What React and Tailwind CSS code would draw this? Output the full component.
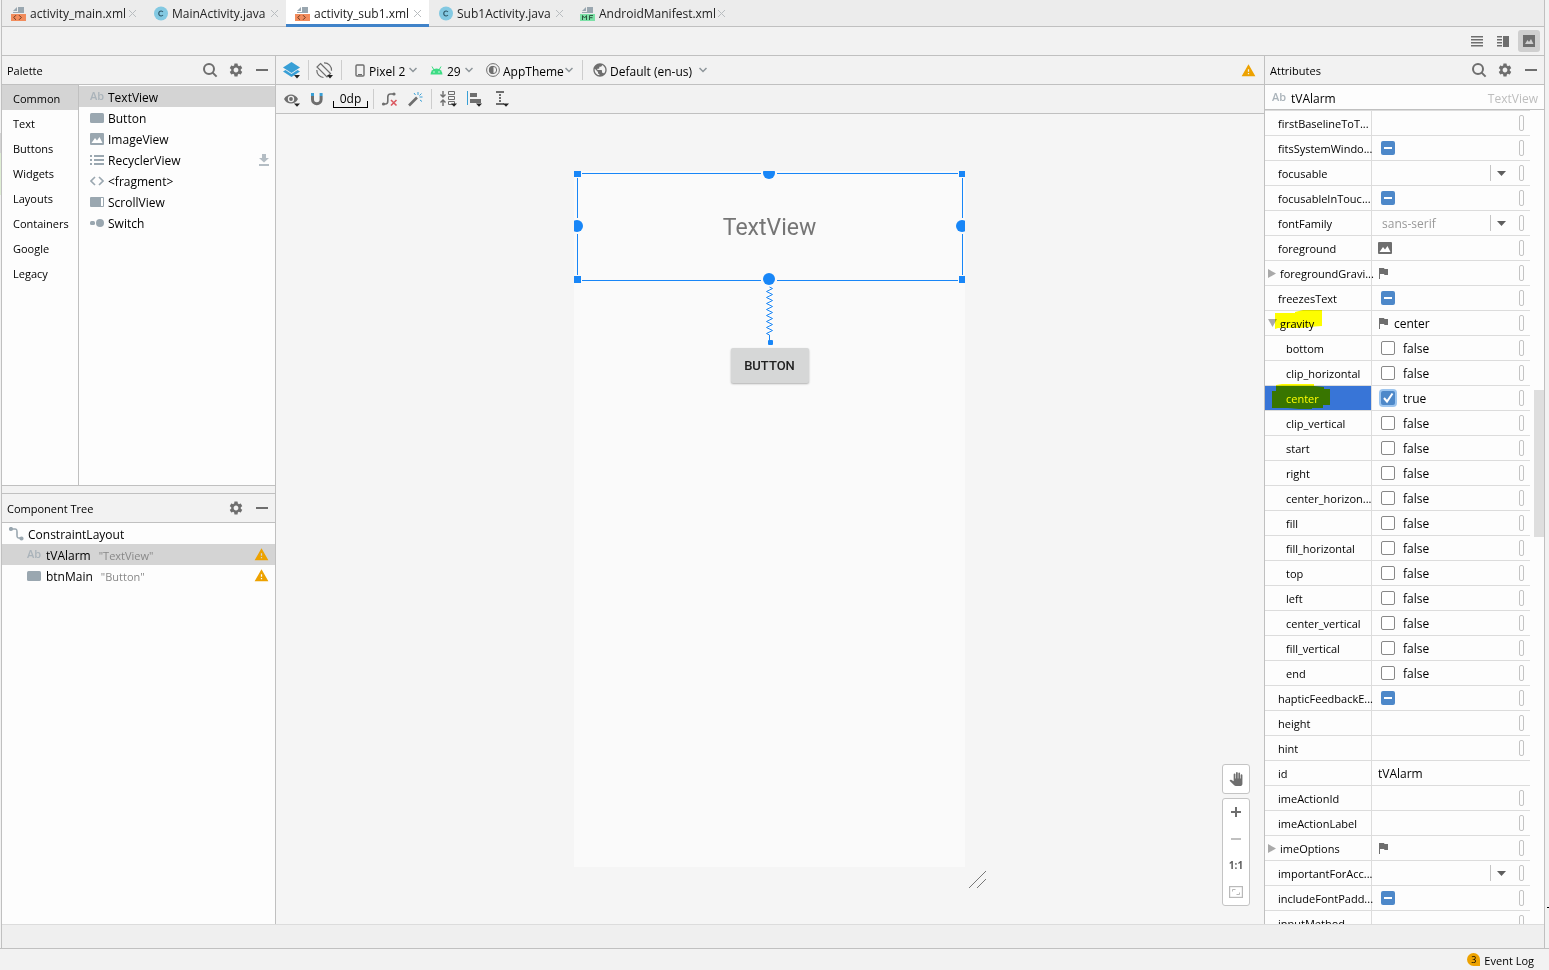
import { MdSettings, MdPublic, MdWarning, MdPanTool } from 'react-icons/md'

const TABS = [
  { name: 'activity_main.xml', kind: 'xml', width: 'w-[142px]' },
  { name: 'MainActivity.java', kind: 'java', width: 'w-[142px]' },
  { name: 'activity_sub1.xml', kind: 'xml', width: 'w-[143px]', active: true },
  { name: 'Sub1Activity.java', kind: 'java', width: 'w-[142px]' },
  { name: 'AndroidManifest.xml', kind: 'manifest', width: 'w-[162px]' },
]

const CATEGORIES = ['Common', 'Text', 'Buttons', 'Widgets', 'Layouts', 'Containers', 'Google', 'Legacy']

const WIDGETS = [
  { name: 'TextView', icon: 'text' },
  { name: 'Button', icon: 'button' },
  { name: 'ImageView', icon: 'image' },
  { name: 'RecyclerView', icon: 'list', download: true },
  { name: '<fragment>', icon: 'fragment' },
  { name: 'ScrollView', icon: 'scroll' },
  { name: 'Switch', icon: 'switch' },
]

const ATTRIBUTES = [
  { name: 'firstBaselineToT...', type: 'text' },
  { name: 'fitsSystemWindo...', type: 'mixed' },
  { name: 'focusable', type: 'select' },
  { name: 'focusableInTouc...', type: 'mixed' },
  { name: 'fontFamily', type: 'select', value: 'sans-serif' },
  { name: 'foreground', type: 'image' },
  { name: 'foregroundGravi...', type: 'flag', expand: 'closed' },
  { name: 'freezesText', type: 'mixed' },
  { name: 'gravity', type: 'flag', value: 'center', expand: 'open', marked: true },
  { name: 'bottom', type: 'bool', child: true },
  { name: 'clip_horizontal', type: 'bool', child: true },
  { name: 'center', type: 'bool', child: true, checked: true, selected: true },
  { name: 'clip_vertical', type: 'bool', child: true },
  { name: 'start', type: 'bool', child: true },
  { name: 'right', type: 'bool', child: true },
  { name: 'center_horizon...', type: 'bool', child: true },
  { name: 'fill', type: 'bool', child: true },
  { name: 'fill_horizontal', type: 'bool', child: true },
  { name: 'top', type: 'bool', child: true },
  { name: 'left', type: 'bool', child: true },
  { name: 'center_vertical', type: 'bool', child: true },
  { name: 'fill_vertical', type: 'bool', child: true },
  { name: 'end', type: 'bool', child: true },
  { name: 'hapticFeedbackE...', type: 'mixed' },
  { name: 'height', type: 'text' },
  { name: 'hint', type: 'text' },
  { name: 'id', type: 'text', value: 'tVAlarm', noPill: true },
  { name: 'imeActionId', type: 'text' },
  { name: 'imeActionLabel', type: 'text' },
  { name: 'imeOptions', type: 'flag', expand: 'closed' },
  { name: 'importantForAcc...', type: 'select' },
  { name: 'includeFontPadd...', type: 'mixed' },
  { name: 'inputMethod', type: 'text' },
]

const FileIcon = ({ kind }) => {
  if (kind === 'java') {
    return (
      <svg width="16" height="15" viewBox="0 0 16 15" className="shrink-0">
        <circle cx="8" cy="7.5" r="7" fill="#83c9e2" />
        <path d="M9.9 6a2.300 2.500 0 1 0 0 3" fill="none" stroke="#2f5a6b" strokeWidth="1.2" />
      </svg>
    )
  }
  return (
    <svg width="16" height="16" viewBox="0 0 16 16" className="shrink-0">
      <path d="M7 1h6v6H2V6h5z" fill="#9aa7b0" />
      <path d="M6 1v4H2z" fill="#9aa7b0" />
      {kind === 'xml' ? (
        <>
          <rect x="0" y="8" width="15" height="7" fill="#f28c5c" />
          <path d="M5 9.2 2.7 11.5 5 13.8M8 9.2l2.3 2.3L8 13.8" fill="none" stroke="#6b3a22" />
        </>
      ) : (
        <>
          <rect x="0" y="8" width="15" height="7" fill="#7ce0a6" />
          <path d="M2.5 14V9.5l2 2.5 2-2.5V14M9.5 14V9.5h3.5M9.5 11.7h3" fill="none" stroke="#2c5a40" />
        </>
      )}
    </svg>
  )
}

const CloseIcon = () => (
  <svg width="9" height="9" viewBox="0 0 9 9" fill="none" stroke="#b9bdc0">
    <path d="M1 1l7 7M8 1L1 8" />
  </svg>
)

const Tab = ({ tab }) => (
  <div
    className={`flex items-center border-b-3 pt-[3px] pr-[7px] pl-[9px] ${tab.width} ${
      tab.active ? 'border-[#4083c9] bg-white' : 'border-transparent'
    }`}
  >
    <button role="tab" aria-selected={!!tab.active} className="flex flex-1 items-center gap-[3px] whitespace-nowrap text-[#222]">
      <FileIcon kind={tab.kind} />
      <span className="pt-px">{tab.name}</span>
    </button>
    <button aria-label={`Close ${tab.name}`}>
      <CloseIcon />
    </button>
  </div>
)

const AbIcon = () => <span className="w-[14px] pb-[2px] text-[11px] leading-none font-semibold text-[#aab3ba]">Ab</span>

const ImageIcon = ({ color = '#9aa7b0' }) => (
  <svg width="14" height="12" viewBox="0 0 14 12">
    <rect width="14" height="12" rx="1" fill={color} />
    <path d="M1.5 10 5 5l2 2.5L9.5 4l3 6z" fill="#fff" />
  </svg>
)

const WidgetIcon = ({ icon }) => {
  switch (icon) {
    case 'text':
      return <AbIcon />
    case 'image':
      return <ImageIcon />
    case 'button':
      return (
        <svg width="14" height="10" viewBox="0 0 14 10">
          <rect width="14" height="10" rx="1.5" fill="#9aa7b0" />
        </svg>
      )
    case 'list':
      return (
        <svg width="14" height="10" viewBox="0 0 14 10" fill="#9aa7b0">
          <path d="M0 0h2v2H0zM4 0h10v2H4zM0 4h2v2H0zM4 4h10v2H4zM0 8h2v2H0zM4 8h10v2H4z" />
        </svg>
      )
    case 'fragment':
      return (
        <svg width="14" height="10" viewBox="0 0 14 10" fill="none" stroke="#9aa7b0" strokeWidth="1.6">
          <path d="M5 1 1 5l4 4M9 1l4 4-4 4" />
        </svg>
      )
    case 'scroll':
      return (
        <svg width="14" height="10" viewBox="0 0 14 10">
          <rect width="14" height="10" rx="1" fill="#9aa7b0" />
          <rect x="11" y="1" width="2" height="8" fill="#fff" />
        </svg>
      )
    default:
      return (
        <svg width="14" height="10" viewBox="0 0 14 10" fill="#9aa7b0">
          <rect x="0" y="3" width="5" height="4" rx="1.5" />
          <circle cx="10" cy="5" r="4" />
        </svg>
      )
  }
}

const PanelHeader = ({ title, search }) => (
  <div className="flex h-[29px] shrink-0 items-center border-b border-[#c0c0c0] pr-[7px] pl-[5px] text-[#6e6e6e]">
    <h2 className="flex-1 pt-px text-[11px] text-black">{title}</h2>
    <div className="flex items-center gap-[10px]">
      {search && (
        <button aria-label={`Search ${title}`}>
          <svg width="16" height="16" viewBox="0 0 16 16" fill="none" stroke="#6e6e6e" strokeWidth="2">
            <circle cx="7" cy="7" r="5" />
            <path d="m10.6 10.6 4 4" />
          </svg>
        </button>
      )}
      <button aria-label={`${title} options`}>
        <MdSettings size={16} />
      </button>
      <button aria-label={`Hide ${title}`} className="ml-[2px] flex h-4 w-3 items-center">
        <span className="h-[2px] w-3 bg-[#6e6e6e]" />
      </button>
    </div>
  </div>
)

const Palette = () => (
  <section className="flex min-h-0 flex-1 flex-col border-b border-[#c0c0c0]">
    <PanelHeader title="Palette" search />
    <div className="flex flex-1 bg-[#fdfdfd]">
      <ul className="w-[77px] border-r border-[#c0c0c0] text-[11px]">
        {CATEGORIES.map((c, i) => (
          <li key={c}>
            <button className={`flex h-[25px] w-full items-center pt-[3px] pl-[11px] ${i === 0 ? 'bg-[#d4d4d4]' : ''}`}>
              {c}
            </button>
          </li>
        ))}
      </ul>
      <ul className="flex-1 pt-px">
        {WIDGETS.map((w, i) => (
          <li key={w.name} className={`flex h-[21px] items-center gap-1 pr-[6px] pl-[11px] ${i === 0 ? 'bg-[#d4d4d4]' : ''}`}>
            <WidgetIcon icon={w.icon} />
            <span className="flex-1 pt-[3px]">{w.name}</span>
            {w.download && (
              <button aria-label="Add to project">
                <svg width="10" height="12" viewBox="0 0 10 12" fill="#b4bdc4">
                  <path d="M3 0h4v4h3L5 8.500 0 4h3zM0 10h10v2H0z" />
                </svg>
              </button>
            )}
          </li>
        ))}
      </ul>
    </div>
  </section>
)

const ComponentTree = () => (
  <section className="flex h-[431px] shrink-0 flex-col border-t border-[#c0c0c0]">
    <PanelHeader title="Component Tree" />
    <ul className="flex-1 bg-[#fdfdfd]">
      <li className="flex h-[21px] items-center gap-1 pl-[7px]">
        <svg width="15" height="14" viewBox="0 0 15 14" fill="none" stroke="#9aa7b0" strokeWidth="1.6">
          <path d="M2 2h4c2 0 2 1 2 3v3c0 2 0 3 2 3h3" />
          <circle cx="2" cy="2" r="1.300" fill="#9aa7b0" />
          <circle cx="12.500" cy="11.500" r="1.300" fill="#9aa7b0" />
        </svg>
        <span className="pt-[3px]">ConstraintLayout</span>
      </li>
      <li className="flex h-[21px] items-center bg-[#d4d4d4] pr-[6px] pl-[25px]">
        <AbIcon />
        <span className="ml-[5px] pt-[3px]">tVAlarm</span>
        <span className="ml-2 flex-1 pt-[2px] text-[11px] text-[#888]">"TextView"</span>
        <MdWarning size={15} color="#eda200" />
      </li>
      <li className="flex h-[21px] items-center pr-[6px] pl-[25px]">
        <WidgetIcon icon="button" />
        <span className="ml-[5px] pt-[3px]">btnMain</span>
        <span className="ml-2 flex-1 pt-[2px] text-[11px] text-[#888]">"Button"</span>
        <MdWarning size={15} color="#eda200" />
      </li>
    </ul>
  </section>
)

const Chevron = () => (
  <svg width="8" height="6" viewBox="0 0 8 6" fill="none" stroke="#8c9499" strokeWidth="1.500">
    <path d="M.5 1 4 4.500 7.500 1" />
  </svg>
)

const Divider = () => <span className="h-5 w-px bg-[#cdcdcd]" />

const DesignToolbar = () => (
  <>
    <div className="flex h-[29px] shrink-0 items-center border-b border-[#c0c0c0] pr-2 pl-[7px]">
      <button aria-label="Select design surface" className="mr-[7px]">
        <svg width="18" height="17" viewBox="0 0 18 17">
          <path d="M8.500 0 17 5.500 8.500 11 0 5.500z" fill="#389fd6" />
          <path d="m0 9.500 2.500-1.500 6 4 6-4L17 9.500 8.500 15z" fill="#389fd6" />
          <path d="M11 13h6l-3 3.500z" fill="#222" />
        </svg>
      </button>
      <Divider />
      <button aria-label="Orientation" className="mx-[7px]">
        <svg width="18" height="17" viewBox="0 0 18 17" fill="none" stroke="#6e6e6e" strokeWidth="1.200">
          <path d="m4.500 1.500 10 10-3.500 3.500-10-10z" />
          <path d="M8 .800a7.300 7.300 0 0 1 7.500 8M7.500 15.500A7.300 7.300 0 0 1 .800 8" />
          <path d="M11 13h6l-3 3.500z" fill="#222" stroke="none" />
        </svg>
      </button>
      <Divider />
      <button className="ml-[13px] flex items-center gap-1 whitespace-nowrap">
        <svg width="10" height="13" viewBox="0 0 10 13" fill="none" stroke="#6e6e6e">
          <rect x="1" y="1" width="8" height="11" rx="1" strokeWidth="1.400" />
          <path d="M3 10.500h4" />
        </svg>
        <span className="w-[36px] pt-[3px] text-left">Pixel 2</span>
        <Chevron />
      </button>
      <button className="ml-[13px] flex items-center gap-1 whitespace-nowrap">
        <svg width="13" height="9" viewBox="0 0 13 9">
          <path d="M.5 8.500a6 6 0 0 1 12 0z" fill="#3ddc84" />
          <path d="M2 .500 4 4M11 .500 9 4" stroke="#3ddc84" />
          <circle cx="4" cy="6" r=".700" fill="#fff" />
          <circle cx="9" cy="6" r=".700" fill="#fff" />
        </svg>
        <span className="w-[14px] pt-[3px] text-left">29</span>
        <Chevron />
      </button>
      <button className="ml-[13px] flex items-center gap-[3px] whitespace-nowrap">
        <svg width="14" height="14" viewBox="0 0 14 14" fill="none" stroke="#6e6e6e">
          <circle cx="7" cy="7" r="6.400" />
          <circle cx="7" cy="7" r="3.700" />
          <path d="M7 3.300a3.700 3.700 0 0 0 0 7.400z" fill="#6e6e6e" />
        </svg>
        <span className="w-[59px] pt-[3px] text-left">AppTheme</span>
        <Chevron />
      </button>
      <span className="mx-[9px] flex">
        <Divider />
      </span>
      <button className="flex items-center gap-[2px] whitespace-nowrap">
        <MdPublic size={16} color="#6e6e6e" />
        <span className="w-[87px] pt-[3px] text-left">Default (en-us)</span>
        <Chevron />
      </button>
      <button aria-label="Warnings" className="ml-auto">
        <MdWarning size={15} color="#eda200" />
      </button>
    </div>
    <div className="flex h-[29px] shrink-0 items-center border-b border-[#c0c0c0] pl-[8px]">
      <button aria-label="View options" className="mr-[9px]">
        <svg width="17" height="15" viewBox="0 0 17 15">
          <path d="M0 7c3-6 11-6 14 0-3 6-11 6-14 0z" fill="#6e6e6e" />
          <circle cx="7" cy="7" r="3.200" fill="#f2f2f2" />
          <circle cx="7" cy="7" r="1.900" fill="#6e6e6e" />
          <path d="M10 11.500h6l-3 3.300z" fill="#222" />
        </svg>
      </button>
      <button aria-label="Autoconnect" className="mr-[9px]">
        <svg width="14" height="14" viewBox="0 0 14 14">
          <path d="M2.500 4v3.500a4.300 4.300 0 0 0 8.600 0V4" fill="none" stroke="#6e6e6e" strokeWidth="3" />
          <path d="M1 1h3v3H1zM9.600 1h3v3h-3z" fill="#389fd6" />
        </svg>
      </button>
      <button
        aria-label="Default margins"
        className="relative flex h-[17px] w-[35px] items-center justify-center border-b border-black pt-px leading-none"
      >
        0dp
        <span className="absolute bottom-0 left-0 h-[6px] w-px bg-black" />
        <span className="absolute right-0 bottom-0 h-[6px] w-px bg-black" />
      </button>
      <span className="mr-[7px] ml-[5px] flex">
        <Divider />
      </span>
      <button aria-label="Clear constraints" className="mr-[10px]">
        <svg width="17" height="16" viewBox="0 0 17 16" fill="none">
          <path d="M2 13h2.500c2 0 2.300-1 2.300-3V6c0-2 .500-3 2.700-3H13" stroke="#6e6e6e" strokeWidth="1.600" />
          <circle cx="2.500" cy="13" r="1.600" fill="#6e6e6e" />
          <circle cx="13" cy="3" r="1.600" fill="#6e6e6e" />
          <path d="m10 9 5.500 5.500M15.500 9 10 14.500" stroke="#db5860" strokeWidth="1.600" />
        </svg>
      </button>
      <button aria-label="Infer constraints">
        <svg width="15" height="15" viewBox="0 0 15 15" fill="none">
          <path d="m1 13.500 8-8" stroke="#6e6e6e" strokeWidth="2.600" />
          <path d="M10 0v3M14.500 5h-3M6 1l1.500 2M13.500 1.500l-2 2M14 9.500l-2-1.500" stroke="#389fd6" />
        </svg>
      </button>
      <span className="mx-[8px] flex">
        <Divider />
      </span>
      <button aria-label="Pack" className="mr-[10px]">
        <svg width="17" height="16" viewBox="0 0 17 16" fill="none" stroke="#6e6e6e">
          <path d="M3 0v6M.5 3.500 3 6l2.500-2.500M3 15V9M.5 11.500 3 9l2.500 2.500" strokeWidth="1.400" />
          <path d="M8.500 .500h6v3h-6zM8.500 5.500h6v3h-6zM8.500 10.500h6v3h-6z" />
          <path d="M11 12.500h6l-3 3.300z" fill="#222" stroke="none" />
        </svg>
      </button>
      <button aria-label="Align" className="mr-[12px]">
        <svg width="16" height="16" viewBox="0 0 16 16">
          <path d="M0 0h1v14H0z" fill="#389fd6" />
          <path d="M3 2h7v4H3zM3 8h11v4H3z" fill="#6e6e6e" />
          <path d="M9 12.500h6l-3 3.300z" fill="#222" />
        </svg>
      </button>
      <button aria-label="Guidelines">
        <svg width="14" height="16" viewBox="0 0 14 16">
          <path d="M1 0h8v2H1zM1 12h8v2H1zM4 3h2v2H4zM4 6h2v2H4zM4 9h2v2H4z" fill="#6e6e6e" />
          <path d="M8 12.500h6l-3 3.300z" fill="#222" />
        </svg>
      </button>
    </div>
  </>
)

const SelectionOverlay = () => (
  <svg width="391" height="175" viewBox="0 0 391 175" className="absolute top-0 left-0">
    <g stroke="#1886f7" fill="none">
      <path d="M8 2.500H187M203 2.500H384M8 109.500H187M203 109.500H384" />
      <path d="M3.500 7V47M3.500 63V104M388.500 7V47M388.500 63V104" />
      <path d="M195.500 116l3 1.500-6 3 6 3-6 3 6 3-6 3 6 3-6 3 6 3-6 3 6 3-6 3 6 3-6 3 6 3-6 3 3 1.500v5" />
    </g>
    <g fill="#1886f7">
      <rect x="0" y="0" width="7" height="6" />
      <rect x="385" y="0" width="6" height="6" />
      <rect x="0" y="105" width="7" height="7" />
      <rect x="385" y="105" width="6" height="7" />
      <circle cx="195" cy="2" r="6" />
      <circle cx="195" cy="108" r="6" />
      <circle cx="3" cy="55" r="6" />
      <circle cx="388" cy="55" r="6" />
      <rect x="194" y="169" width="5" height="5" rx="1" />
    </g>
  </svg>
)

const DesignSurface = () => (
  <div className="relative flex min-h-0 flex-1 justify-center bg-[#f5f5f5] py-[57px] pr-px">
    <div className="relative w-[391px] bg-[#fafafa] font-[Roboto,sans-serif]">
      <SelectionOverlay />
      <p className="flex h-[114px] items-center justify-center text-[23px] text-[#757575]">TextView</p>
      <div className="flex justify-center pt-[63px]">
        <button className="h-[35px] w-[78px] rounded-[2px] bg-[#d6d7d7] text-[13px] font-medium text-[#212121] shadow-[0_1px_2px_rgba(0,0,0,0.3)]">
          BUTTON
        </button>
      </div>
      <svg width="20" height="20" viewBox="0 0 20 20" className="absolute -right-[23px] -bottom-[23px]" stroke="#777">
        <path d="M1 18 18 1M9 18l9-9" />
      </svg>
    </div>
    <div className="absolute right-[14px] bottom-[18px] flex w-7 flex-col gap-1">
      <button aria-label="Pan" className="flex h-[30px] items-center justify-center rounded-[3px] border border-[#c4c4c4] bg-white">
        <MdPanTool size={14} color="#6e6e6e" />
      </button>
      <div className="flex h-[108px] flex-col items-center justify-around rounded-[3px] border border-[#c4c4c4] bg-white">
        <button aria-label="Zoom in" className="flex h-[26px] items-center">
          <svg width="10" height="10" viewBox="0 0 10 10" fill="#6e6e6e">
            <path d="M4 0h2v4h4v2H6v4H4V6H0V4h4z" />
          </svg>
        </button>
        <button aria-label="Zoom out" className="flex h-[26px] items-center">
          <span className="h-[2px] w-[10px] bg-[#c0c0c0]" />
        </button>
        <button className="flex h-[26px] items-center text-[10px] font-bold text-[#5e5e5e]">1:1</button>
        <button aria-label="Zoom to fit" className="flex h-[26px] items-center">
          <svg width="14" height="12" viewBox="0 0 14 12" fill="none" stroke="#b9b9b9">
            <rect x=".500" y=".500" width="13" height="11" strokeWidth="1.400" />
            <path d="M3.500 5.500v-2h3M10.500 6.500v2h-3" />
          </svg>
        </button>
      </div>
    </div>
  </div>
)

const CheckBox = ({ id, checked, mixed }) => (
  <span className="grid size-[14px] shrink-0">
    <input
      id={id}
      type="checkbox"
      defaultChecked={checked || mixed}
      className={`col-start-1 row-start-1 size-[14px] appearance-none rounded-[2px] ${
        checked || mixed ? 'bg-[#4d88c9]' : 'border border-[#888] bg-white'
      } ${checked ? 'ring-2 ring-[#9cc5ef]' : ''}`}
    />
    {(checked || mixed) && (
      <svg viewBox="0 0 14 14" fill="none" stroke="#fff" strokeWidth="2" className="pointer-events-none col-start-1 row-start-1">
        <path d={mixed ? 'M3 7h8' : 'M3 7l3 3.500 5.500-8'} />
      </svg>
    )}
  </span>
)

const FlagIcon = () => (
  <svg width="9" height="11" viewBox="0 0 9 11" fill="#6e6e6e">
    <path d="M0 0h5l.5 1H9v6H5.500L5 6H1v5H0z" />
  </svg>
)

const AttributeValue = ({ attr, id }) => {
  switch (attr.type) {
    case 'mixed':
      return (
        <div className="pl-[9px]">
          <CheckBox id={id} mixed />
        </div>
      )
    case 'bool':
      return (
        <div className="flex items-center gap-2 pl-[9px]">
          <CheckBox id={id} checked={attr.checked} />
          <span className="pt-[2px]">{attr.checked ? 'true' : 'false'}</span>
        </div>
      )
    case 'select':
      return (
        <div className="flex flex-1 items-center pr-[13px]">
          <select id={id} className="h-4 w-full min-w-0 flex-1 appearance-none border-r border-[#c4c4c4] pt-px pl-[10px] leading-4 text-[#999]">
            <option>{attr.value || ''}</option>
          </select>
          <svg width="9" height="5" viewBox="0 0 9 5" className="ml-[6px]">
            <path d="M0 0h9L4.500 5z" fill="#5e5e5e" />
          </svg>
        </div>
      )
    case 'image':
      return (
        <button id={id} className="pl-[6px]">
          <ImageIcon color="#6e6e6e" />
        </button>
      )
    case 'flag':
      return (
        <button id={id} className="flex items-center gap-[6px] pl-[7px]">
          <FlagIcon />
          <span className="pt-[2px]">{attr.value}</span>
        </button>
      )
    default:
      return <input id={id} defaultValue={attr.value} className="h-5 w-full min-w-0 flex-1 pl-[6px] outline-none" />
  }
}

const ExpandArrow = ({ open }) => (
  <svg width="9" height="9" viewBox="0 0 9 9" fill="#a9a9a9" className="mr-[3px] shrink-0">
    <path d={open ? 'M0 0h9L4.500 8z' : 'M0 0l8 4.500L0 9z'} />
  </svg>
)

// highlighter stroke over a label
const Marker = ({ selected }) =>
  selected ? (
    <svg width="58" height="25" viewBox="0 0 58 25" className="pointer-events-none absolute -top-[2px] left-[7px] mix-blend-multiply">
      <path d="M4 1 10 0h32v2l10 1v2h6v16h-7v3H40v1H27l-11-1H0V7h4z" fill="#ff0" />
    </svg>
  ) : (
    <svg width="47" height="20" viewBox="0 0 47 20" className="pointer-events-none absolute -top-px left-[10px] mix-blend-multiply">
      <path d="M0 3h20V2l8-2h19v16l-14 1-7 1H3l-3 1z" fill="#ff0" />
    </svg>
  )

const AttributeRow = ({ attr, index }) => {
  const id = `attr-${index}`
  const pad = attr.expand ? 'pl-[3px]' : attr.child ? 'pl-[21px]' : 'pl-[13px]'
  return (
    <tr>
      <th scope="row" className="border-r border-b border-[#dcdcdc] p-0 text-left text-[11px] font-normal">
        <div className={`relative flex h-6 items-center whitespace-nowrap ${pad} ${attr.selected ? 'bg-[#3875d7] text-white' : ''}`}>
          {attr.expand && <ExpandArrow open={attr.expand === 'open'} />}
          <label htmlFor={id} className="pt-[2px]">
            {attr.name}
          </label>
          {(attr.marked || attr.selected) && <Marker selected={attr.selected} />}
        </div>
      </th>
      <td className="border-b border-[#dcdcdc] p-0">
        <div className="flex h-6 items-center justify-between pr-[6px]">
          <AttributeValue attr={attr} id={id} />
          {!attr.noPill && (
            <button aria-label={`Pick resource for ${attr.name}`} className="h-4 w-[5px] shrink-0 rounded-[2px] border border-[#c4c4c4]" />
          )}
        </div>
      </td>
    </tr>
  )
}

const Attributes = () => (
  <aside className="flex w-[280px] shrink-0 flex-col border-l border-[#c0c0c0]">
    <PanelHeader title="Attributes" search />
    <div className="flex h-[25px] shrink-0 items-center border-b border-[#c0c0c0] bg-[#fdfdfd] pr-[6px] pl-[7px]">
      <AbIcon />
      <span className="ml-[5px] flex-1 pt-[4px]">tVAlarm</span>
      <span className="pt-[4px] text-[#bdbdbd]">TextView</span>
    </div>
    <div className="flex min-h-0 flex-1 overflow-hidden bg-[#fdfdfd]">
      <div className="flex-1">
        <table className="w-full table-fixed border-separate border-spacing-0 border-t border-[#dcdcdc]">
          <colgroup>
            <col className="w-[107px]" />
            <col />
          </colgroup>
          <tbody>
            {ATTRIBUTES.map((attr, i) => (
              <AttributeRow key={attr.name} attr={attr} index={i} />
            ))}
          </tbody>
        </table>
      </div>
      <div className="w-[14px] pt-[280px] pl-1">
        <div className="h-[147px] bg-[#dedede]" />
      </div>
    </div>
  </aside>
)

const ViewModes = () => (
  <div className="flex h-[29px] shrink-0 items-center justify-end gap-[5px] border-b border-[#c0c0c0] bg-[#f2f2f2] pr-1">
    <button aria-label="Code" className="flex size-[21px] items-center justify-center">
      <svg width="12" height="11" viewBox="0 0 12 11" fill="#6e6e6e">
        <path d="M0 0h12v1.500H0zM0 3h12v1.500H0zM0 6h12v1.500H0zM0 9h12v1.500H0z" />
      </svg>
    </button>
    <button aria-label="Split" className="flex size-[21px] items-center justify-center">
      <svg width="12" height="11" viewBox="0 0 12 11" fill="#6e6e6e">
        <path d="M0 0h5v1.500H0zM0 3h5v1.500H0zM0 6h5v1.500H0zM0 9h5v1.500H0zM6 0h6v11H6z" />
      </svg>
    </button>
    <button aria-label="Design" className="flex size-[22px] items-center justify-center rounded-[3px] bg-[#cfcfcf]">
      <svg width="12" height="12" viewBox="0 0 12 12">
        <rect width="12" height="12" fill="#6e6e6e" />
        <path d="M2 9l2.500-4L6 7l2-3 2.500 5z" fill="#cfcfcf" />
      </svg>
    </button>
  </div>
)

const App = () => (
  <div className="relative flex h-screen flex-col bg-[#f2f2f2] font-['Open_Sans','Noto_Sans',sans-serif] text-[12px] leading-4 text-black">
    <div className="mr-1 ml-px flex min-h-0 flex-1 flex-col border-x border-[#c0c0c0]">
      <nav role="tablist" className="flex h-[27px] shrink-0 bg-[#ececec] shadow-[inset_0_-1px_0_#c0c0c0]">
        {TABS.map((tab) => (
          <Tab key={tab.name} tab={tab} />
        ))}
      </nav>
      <ViewModes />
      <main className="flex min-h-0 flex-1">
        <div className="flex w-[274px] shrink-0 flex-col gap-[7px] border-r border-[#c0c0c0]">
          <Palette />
          <ComponentTree />
        </div>
        <div className="flex min-w-0 flex-1 flex-col">
          <DesignToolbar />
          <DesignSurface />
        </div>
        <Attributes />
      </main>
      <div className="h-6 shrink-0 border-t border-[#dcdcdc] bg-[#efefef]" />
    </div>
    <footer className="flex h-[22px] shrink-0 items-center justify-end border-t border-[#c0c0c0] pr-[15px]">
      <button className="flex items-center gap-1">
        <span className="flex size-[13px] items-center justify-center rounded-full rounded-br-none bg-[#eda200] text-[9px] leading-none">3</span>
        <span className="pt-[3px] text-[11px]">Event Log</span>
      </button>
    </footer>
    {/* slivers of the neighbouring tool windows */}
    <div className="absolute top-[133px] left-0 h-[62px] w-px bg-[#dfeed4]">
      <div className="h-5 bg-[#d4d4d4]" />
    </div>
    <div className="absolute right-0 bottom-[62px] h-px w-[2px] bg-black" />
  </div>
)

export default App
